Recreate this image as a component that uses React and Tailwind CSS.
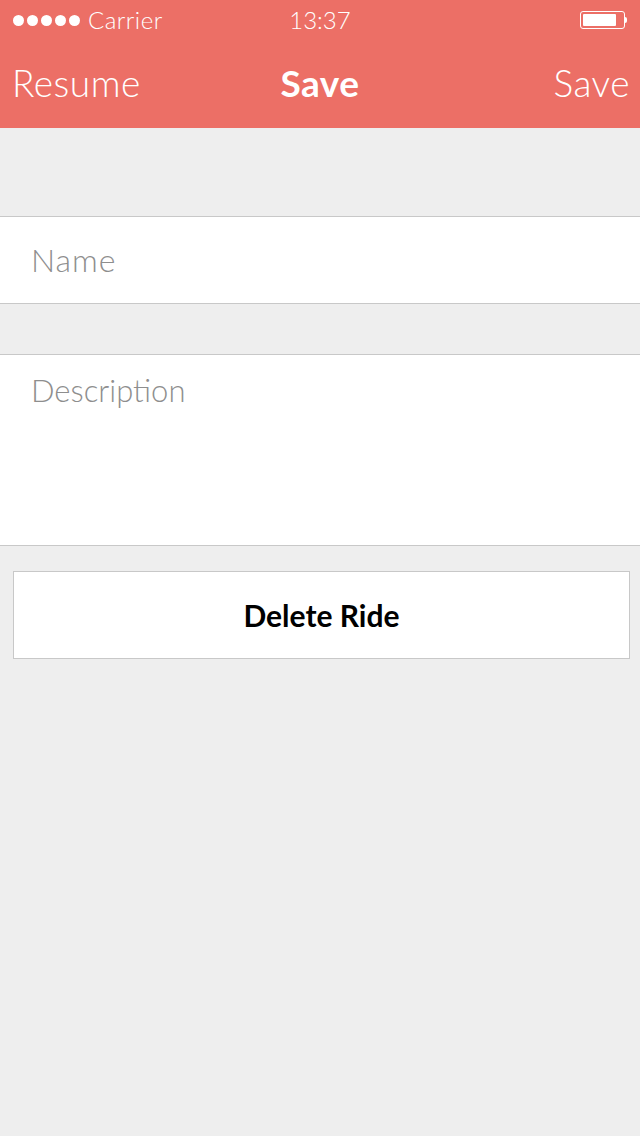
import React from 'react';

const font = { fontFamily: 'Lato, "Open Sans", sans-serif' };

const StatusBar = () => (
  <div className="flex h-[40px] items-center justify-between pl-[13px] pr-[13px] text-white">
    <div className="flex items-center gap-[8px]">
      <div className="flex gap-[3px]">
        {[0, 1, 2, 3, 4].map((i) => (
          <span key={i} className="block h-[11px] w-[11px] rounded-full bg-white" />
        ))}
      </div>
      <span className="text-[24px] font-light leading-none tracking-[0.5px]">Carrier</span>
    </div>
    <span className="absolute left-1/2 -translate-x-1/2 text-[24px] font-light leading-none">13:37</span>
    <div className="flex items-center">
      <div className="flex h-[18px] w-[45px] items-center rounded-[3px] border border-white p-[2px]">
        <div className="h-full w-[33px] rounded-[1px] bg-white" />
      </div>
      <div className="h-[6px] w-[2px] rounded-r-sm bg-white" />
    </div>
  </div>
);

const App = () => {
  return (
    <div className="min-h-[1136px] w-[640px] bg-[#eeeeee]" style={font}>
      <header className="relative bg-[#ec6f66]">
        <StatusBar />
        <nav className="flex h-[88px] items-center justify-between pb-[2px] pl-[12px] pr-[10px] text-white">
          <button className="text-[37px] font-light tracking-[0.5px]">Resume</button>
          <h1 className="absolute left-1/2 -translate-x-1/2 text-[37px] font-bold tracking-[0.5px]">Save</h1>
          <button className="text-[37px] font-light tracking-[0.5px]">Save</button>
        </nav>
      </header>

      <div className="h-[88px]" />

      <div className="flex h-[88px] items-center border-y border-[#c8c8c8] bg-white px-[31px]">
        <input
          placeholder="Name"
          className="w-full bg-transparent text-[32px] font-light tracking-[1px] text-[#333] outline-none placeholder:text-[#8e8e8e]"
        />
      </div>

      <div className="h-[50px]" />

      <div className="h-[192px] border-y border-[#c8c8c8] bg-white px-[31px] pt-[12px]">
        <textarea
          placeholder="Description"
          className="h-full w-full resize-none bg-transparent text-[31px] font-light text-[#333] outline-none placeholder:text-[#8e8e8e]"
        />
      </div>

      <div className="pl-[13px] pr-[10px] pt-[25px]">
        <button className="flex h-[88px] w-full items-center justify-center border border-[#c8c8c8] bg-white text-[30px] font-bold text-black">
          Delete Ride
        </button>
      </div>
    </div>
  );
};

export default App;
